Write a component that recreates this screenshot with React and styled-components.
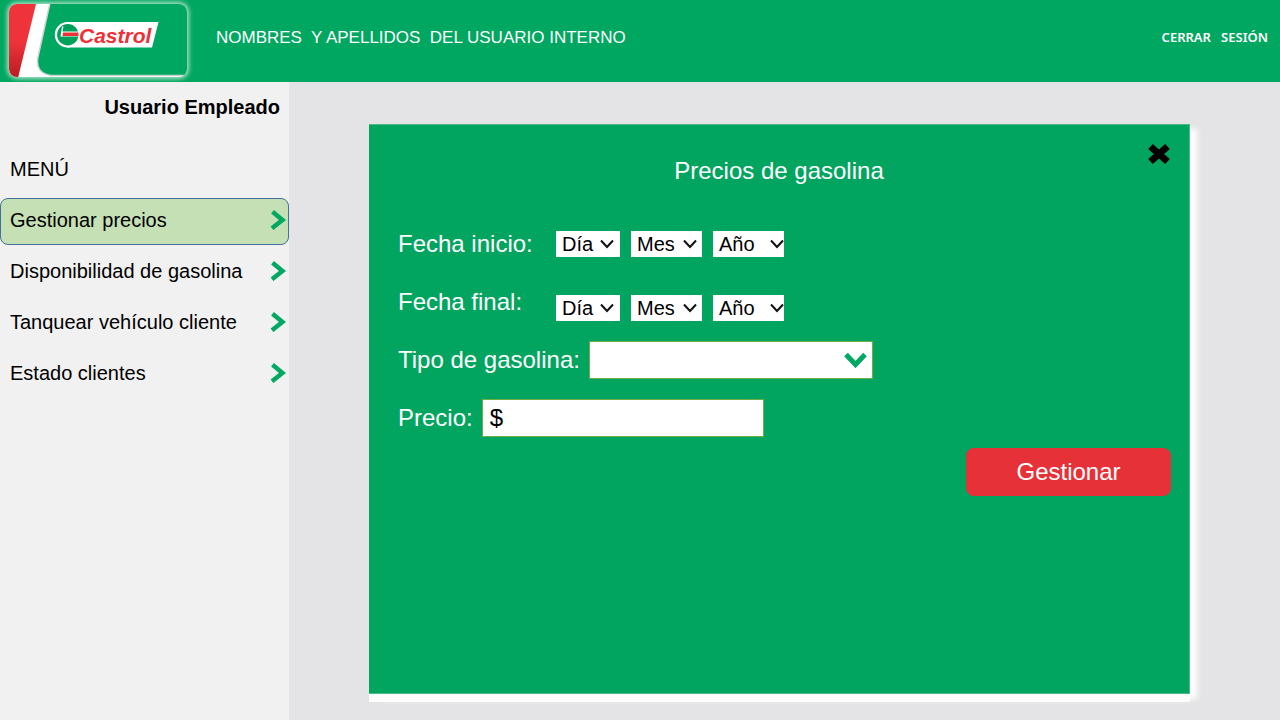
import React from "react";
import styled, { createGlobalStyle } from "styled-components";

const GlobalStyle = createGlobalStyle`
  *, *::before, *::after { box-sizing: border-box; }
  body {
    margin: 0;
    font-family: "Liberation Sans", Arial, sans-serif;
    color: #000;
    background: #e4e4e6;
  }
  button, input, select { font-family: inherit; margin: 0; }
`;

const Page = styled.div`
  min-height: 100vh;
  display: flex;
  flex-direction: column;
`;

const Header = styled.header`
  display: flex;
  align-items: flex-start;
  gap: 16px;
  min-height: 82px;
  padding-right: 12px;
  background: #00a760;
  color: #fff;
`;

const LogoArt = styled.svg`
  display: block;
  flex: none;
`;

const UserName = styled.span`
  flex: 1;
  font-size: 17px;
  line-height: 76px;
  white-space: pre-wrap;
`;

const LogoutLink = styled.a`
  font-family: "Noto Sans", sans-serif;
  font-size: 13px;
  font-weight: 600;
  line-height: 74px;
  color: inherit;
  text-decoration: none;
  white-space: pre;
`;

const Body = styled.div`
  flex: 1;
  display: flex;
`;

const Sidebar = styled.aside`
  flex: none;
  width: 289px;
  padding-top: 10px;
  background: #f1f1f1;
`;

const Role = styled.p`
  margin: 0;
  padding-right: 9px;
  text-align: right;
  font-size: 20px;
  font-weight: 700;
  line-height: 30px;
`;

const MenuTitle = styled.h2`
  margin: 32px 0 14px;
  padding-left: 10px;
  font-size: 20px;
  font-weight: 400;
  line-height: 30px;
`;

const MenuList = styled.ul`
  display: flex;
  flex-direction: column;
  gap: 4px;
  margin: 0;
  padding: 0;
  list-style: none;
`;

const MenuLink = styled.a`
  display: flex;
  align-items: center;
  justify-content: space-between;
  height: 47px;
  padding: 0 2px 3px 9px;
  border: 1px solid ${(p) => (p.$active ? "#41719c" : "transparent")};
  border-radius: 8px;
  background: ${(p) => (p.$active ? "#c5e0b4" : "transparent")};
  color: inherit;
  font-size: 20px;
  text-decoration: none;
  white-space: nowrap;
`;

const Main = styled.main`
  flex: 1;
  display: flex;
  padding: 42px 90px 26px 80px;
`;

const Panel = styled.section`
  flex: 1;
  padding-top: 17px;
  border: solid #4dba8a;
  border-width: 1px 1px 1px 0;
  background: #02a55f;
  color: #fff;
  box-shadow: 0 8px 0 #fcfcfc, 7px 5px 6px #fff;
`;

const PanelHeader = styled.div`
  display: grid;
  grid-template-columns: 1fr auto 1fr;
  min-height: 44px;
  padding: 0 18px;
`;

const Title = styled.h1`
  grid-column: 2;
  align-self: end;
  margin: 0;
  font-size: 24px;
  font-weight: 400;
  line-height: 30px;
`;

const CloseButton = styled.button`
  justify-self: end;
  align-self: start;
  display: block;
  padding: 0;
  border: 0;
  background: none;
  cursor: pointer;
`;

const Form = styled.form`
  display: flex;
  flex-direction: column;
  gap: 20px;
  margin-top: 39px;
  padding: 0 18px 0 29px;
`;

const Row = styled.div`
  display: flex;
  align-items: ${(p) => p.$align || "center"};
  gap: 9px;
  height: 38px;
`;

const Label = styled.label`
  width: ${(p) => (p.$wide ? "149px" : "auto")};
  font-size: 24px;
  line-height: 38px;
  white-space: nowrap;
`;

const DateGroup = styled.div`
  display: flex;
  gap: 11px;
`;

const SelectBox = styled.div`
  display: grid;
  align-items: center;
  width: ${(p) => p.$width};

  > * { grid-area: 1 / 1; }
  > svg {
    justify-self: end;
    margin-right: ${(p) => p.$inset};
    pointer-events: none;
  }
`;

const DateSelect = styled.select`
  appearance: none;
  width: 100%;
  height: 26px;
  padding: 1px 0 0 6px;
  border: 0;
  border-radius: 0;
  background: #fff;
  color: #000;
  font-size: 20px;
  line-height: 25px;
`;

const FuelSelect = styled.select`
  appearance: none;
  width: 100%;
  height: 38px;
  border: 1px solid #70ad47;
  border-radius: 0;
  background: #fff;
  font-size: 24px;
`;

const PriceInput = styled.input`
  width: 282px;
  height: 38px;
  padding: 0 7px;
  border: 1px solid #70ad47;
  background: #fff;
  color: #000;
  font-size: 24px;
`;

const SubmitButton = styled.button`
  align-self: flex-end;
  width: 205px;
  height: 48px;
  margin-top: -9px;
  border: 0;
  border-radius: 8px;
  background: #e63138;
  color: #fff;
  font-size: 24px;
  cursor: pointer;
`;

function Logo() {
  return (
    <LogoArt width="200" height="82" viewBox="0 0 200 82" role="img" aria-label="Castrol">
      <defs>
        <clipPath id="card"><rect x="9" y="4" width="178" height="73" rx="8" /></clipPath>
        <filter id="glow" x="-10%" y="-20%" width="120%" height="140%">
          <feGaussianBlur stdDeviation="2" />
        </filter>
        <linearGradient id="red" x1="0" y1="0" x2="0" y2="1">
          <stop offset="0.5" stopColor="#ee343a" />
          <stop offset="1" stopColor="#b81c22" />
        </linearGradient>
      </defs>
      <rect x="7" y="2" width="182" height="77" rx="10" fill="#a9dfc5" filter="url(#glow)" />
      <g clipPath="url(#card)">
        <rect x="9" y="4" width="178" height="74" fill="#fff" />
        <path d="M9 4H36L18 78H9Z" fill="url(#red)" />
        <path d="M50 3H190V75.500H51Q35 73 38 57Z" fill="#00a760" stroke="#c9d3ce" strokeWidth="1.5" />
      </g>
      <path d="M67 22H158.500L152 47.500H67Z" fill="#fff" />
      <circle cx="67.500" cy="34.800" r="12.700" fill="#fff" />
      <circle cx="67.800" cy="34.800" r="10.700" fill="#00a05b" />
      <path d="M62 26.500L60.500 36.500H79V31.500H62.500L63.500 26.500Z" fill="#fff" />
      <path d="M63 32.500H78.500V36H62.500Z" fill="#ed3237" />
      <text
        x="79"
        y="43"
        fill="#ed3237"
        fontFamily="'Liberation Sans Narrow', 'Liberation Sans', sans-serif"
        fontSize="21"
        fontWeight="700"
        fontStyle="italic"
      >
        Castrol
      </text>
    </LogoArt>
  );
}

const MenuChevron = () => (
  <svg width="16" height="20" viewBox="0 0 16 20" fill="none" stroke="#00a862" strokeWidth="4.500" aria-hidden="true">
    <path d="M2.500 1.800L12.500 10L2 18.300" />
  </svg>
);

const FuelChevron = () => (
  <svg width="23" height="17" viewBox="0 0 23 17" fill="none" stroke="#00a862" strokeWidth="5" aria-hidden="true">
    <path d="M2 2.500L11.500 12.500L21 2.500" />
  </svg>
);

const DateChevron = () => (
  <svg width="14" height="10" viewBox="0 0 14 10" fill="none" stroke="#111" strokeWidth="2" aria-hidden="true">
    <path d="M1 1.500L7 8L13 1.500" />
  </svg>
);

const MENU = ["Gestionar precios", "Disponibilidad de gasolina", "Tanquear vehículo cliente", "Estado clientes"];

const DATE_PARTS = [
  { name: "Día", width: "64px", inset: "6px" },
  { name: "Mes", width: "71px", inset: "5px" },
  { name: "Año", width: "71px", inset: "0" },
];

function DateRow({ id, label, align }) {
  return (
    <Row $align={align}>
      <Label $wide htmlFor={`${id}-Día`}>{label}</Label>
      <DateGroup>
        {DATE_PARTS.map((part) => (
          <SelectBox key={part.name} $width={part.width} $inset={part.inset}>
            <DateSelect id={`${id}-${part.name}`} aria-label={`${label} ${part.name}`}>
              <option>{part.name}</option>
            </DateSelect>
            <DateChevron />
          </SelectBox>
        ))}
      </DateGroup>
    </Row>
  );
}

export default function App() {
  return (
    <Page>
      <GlobalStyle />
      <Header>
        <Logo />
        <UserName>{"NOMBRES  Y APELLIDOS  DEL USUARIO INTERNO"}</UserName>
        <LogoutLink href="#salir">{"CERRAR   SESIÓN"}</LogoutLink>
      </Header>
      <Body>
        <Sidebar>
          <Role>Usuario Empleado</Role>
          <MenuTitle>MENÚ</MenuTitle>
          <nav>
            <MenuList>
              {MENU.map((item, i) => (
                <li key={item}>
                  <MenuLink href={`#menu-${i}`} $active={i === 0}>
                    {item}
                    <MenuChevron />
                  </MenuLink>
                </li>
              ))}
            </MenuList>
          </nav>
        </Sidebar>
        <Main>
          <Panel>
            <PanelHeader>
              <Title>Precios de gasolina</Title>
              <CloseButton type="button" aria-label="Cerrar">
                <svg width="24" height="24" viewBox="0 0 24 24" stroke="#000" strokeWidth="7" fill="none">
                  <path d="M3.500 4.500L20.500 19.500M20.500 4.500L3.500 19.500" />
                </svg>
              </CloseButton>
            </PanelHeader>
            <Form onSubmit={(e) => e.preventDefault()}>
              <DateRow id="inicio" label="Fecha inicio:" />
              <DateRow id="final" label="Fecha final:" align="flex-end" />
              <Row>
                <Label htmlFor="tipo">Tipo de gasolina:</Label>
                <SelectBox $width="284px" $inset="6px">
                  <FuelSelect id="tipo" defaultValue="">
                    <option value=""></option>
                  </FuelSelect>
                  <FuelChevron />
                </SelectBox>
              </Row>
              <Row>
                <Label htmlFor="precio">Precio:</Label>
                <PriceInput id="precio" type="text" defaultValue="$" />
              </Row>
              <SubmitButton type="submit">Gestionar</SubmitButton>
            </Form>
          </Panel>
        </Main>
      </Body>
    </Page>
  );
}
